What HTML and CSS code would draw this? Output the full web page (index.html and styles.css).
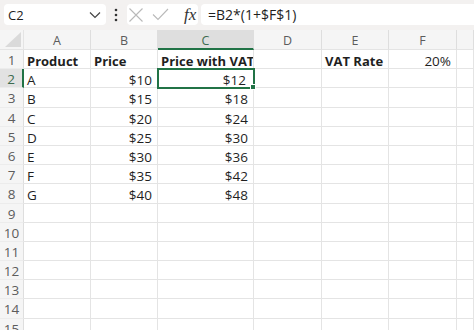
FILE: index.html
```html
<!DOCTYPE html>
<html lang="en">
<head>
<meta charset="UTF-8">
<title>Price with VAT</title>
<link rel="stylesheet" href="styles.css">
</head>
<body>

<div class="formula-bar">
    <div class="name-box">
        <span>C2</span>
        <svg class="chevron" width="12" height="8" viewBox="0 0 12 8"><path d="M1 1.5 L6 6.5 L11 1.5" fill="none" stroke="#444" stroke-width="1.2"/></svg>
    </div>
    <svg class="more" width="4" height="14" viewBox="0 0 4 14"><circle cx="2" cy="2" r="1.3" fill="#333"/><circle cx="2" cy="7" r="1.3" fill="#333"/><circle cx="2" cy="12" r="1.3" fill="#333"/></svg>
    <div class="fx-box">
        <svg width="16" height="16" viewBox="0 0 16 16"><path d="M1.5 1.5 L14.5 14.5 M14.5 1.5 L1.5 14.5" stroke="#b9b9b9" stroke-width="1.1"/></svg>
        <svg width="17" height="13" viewBox="0 0 17 13"><path d="M1 6.5 L6 11.5 L16 1" fill="none" stroke="#b9b9b9" stroke-width="1.1"/></svg>
        <span class="fx">fx</span>
    </div>
    <div class="formula">=B2*(1+$F$1)</div>
</div>

<div class="sheet" id="sheet"></div>

<script>
var cols = ["A", "B", "C", "D", "E", "F", ""];
var data = [
    [["Product", "b"], ["Price", "b"], ["Price with VAT", "b"], ["", ""], ["VAT Rate", "b"], ["20%", "r"]],
    [["A", ""], ["$10", "r"], ["$12", "r"]],
    [["B", ""], ["$15", "r"], ["$18", "r"]],
    [["C", ""], ["$20", "r"], ["$24", "r"]],
    [["D", ""], ["$25", "r"], ["$30", "r"]],
    [["E", ""], ["$30", "r"], ["$36", "r"]],
    [["F", ""], ["$35", "r"], ["$42", "r"]],
    [["G", ""], ["$40", "r"], ["$48", "r"]]
];
var sheet = document.getElementById("sheet");
var html = '<div class="corner"></div>';

cols.forEach(function (c) {
    html += '<div class="col-head' + (c == "C" ? ' selected' : '') + '">' + c + '</div>';
});

for (var r = 1; r <= 15; r++) {
    html += '<div class="row-head' + (r == 2 ? ' selected' : '') + '">' + r + '</div>';
    var row = data[r - 1] || [];
    for (var c = 0; c < cols.length; c++) {
        var cell = row[c] || ["", ""];
        var cls = "cell";
        if (cell[1] == "b") cls += " bold";
        if (cell[1] == "r") cls += " num";
        if (r == 2 && c == 2) cls += " active";
        html += '<div class="' + cls + '">' + cell[0] + '</div>';
    }
}
sheet.innerHTML = html;
</script>

</body>
</html>
```

FILE: styles.css
```css
body {
    margin: 0;
    width: 474px;
    height: 330px;
    overflow: hidden;
    background: #fff;
    font-family: "Open Sans", Arial, sans-serif;
    color: #1f1f1f;
}
.formula-bar {
    display: flex;
    align-items: center;
    height: 30px;
    padding: 0 0 1px 4px;
    box-sizing: border-box;
    background: #f3f1f0;
}
.name-box {
    display: flex;
    align-items: center;
    justify-content: space-between;
    width: 102px;
    height: 21px;
    padding: 0 5px 0 4px;
    box-sizing: border-box;
    background: #fff;
    border-radius: 4px;
    font-size: 13px;
}
.more {
    margin: 0 9px 0 8px;
}
.fx-box {
    display: flex;
    align-items: center;
    width: 71px;
    height: 21px;
    padding-left: 1px;
    box-sizing: border-box;
    background: #fff;
    border-radius: 4px;
    gap: 8px;
}
.fx {
    margin-left: 7px;
    font-family: "Liberation Serif", serif;
    font-style: italic;
    font-size: 17px;
    color: #333;
}
.formula {
    flex: 1;
    height: 21px;
    margin-left: 3px;
    padding-left: 7px;
    line-height: 21px;
    background: #fff;
    border-radius: 4px 0 0 4px;
    font-size: 14px;
}
.sheet {
    display: grid;
    grid-template-columns: 24px 67px 67px 96px 68px 67px 68px 1fr;
    grid-template-rows: 20px repeat(15, 19.2px);
}
.sheet > div {
    box-sizing: border-box;
    border-right: 1px solid #e4e4e4;
    border-bottom: 1px solid #e4e4e4;
    white-space: nowrap;
    overflow: hidden;
}
.corner {
    position: relative;
    background: #f5f5f5;
}
.corner::after {
    content: "";
    position: absolute;
    right: 2px;
    bottom: 2px;
    border-left: 16px solid transparent;
    border-bottom: 15px solid #dadada;
}
.col-head {
    padding-top: 1px;
    background: #f5f5f5;
    text-align: center;
    font-size: 12.5px;
    line-height: 20px;
    color: #5c5c5c;
    border-right-color: #dedede !important;
}
.col-head.selected {
    background: #dedede;
    color: #3d6b4f;
    border-bottom: 2px solid #217346 !important;
}
.row-head {
    padding-top: 1px;
    background: #f5f5f5;
    text-align: center;
    font-size: 13.5px;
    line-height: 19px;
    color: #5c5c5c;
    border-right-color: #dedede !important;
    border-bottom-color: #ececec !important;
}
.row-head.selected {
    background: #e2e2e2;
    color: #3d6b4f;
    border-right: 2px solid #217346 !important;
}
.cell {
    padding: 2px 3px 0;
    font-size: 13.5px;
    line-height: 19px;
}
.bold {
    font-weight: bold;
    font-size: 13px;
}
.num {
    text-align: right;
    padding-right: 5px;
}
.sheet > .cell.active {
    position: relative;
    overflow: visible;
    outline: 2px solid #217346;
    outline-offset: -1px;
    padding-right: 7px;
}
.cell.active::after {
    content: "";
    position: absolute;
    right: -3px;
    bottom: -3px;
    width: 4px;
    height: 4px;
    background: #217346;
    border: 1px solid #fff;
}
```
